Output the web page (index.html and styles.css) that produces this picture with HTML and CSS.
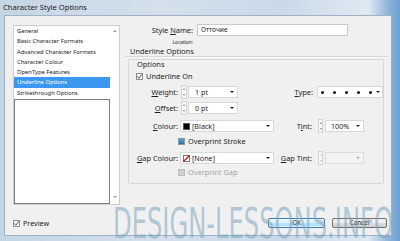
FILE: index.html
```html
<!DOCTYPE html>
<html lang="en">
<head>
    <meta charset="UTF-8">
    <meta name="viewport" content="width=device-width, initial-scale=1.0">
    <title>Character Style Options</title>
    <link rel="stylesheet" href="styles.css">
</head>
<body>
    <div class="window">
        <div class="titlebar">Character Style Options</div>
        <div class="dialog">
            <div class="main">
                <div class="list">
                    <div class="items">
                        <div class="item">General</div>
                        <div class="item">Basic Character Formats</div>
                        <div class="item">Advanced Character Formats</div>
                        <div class="item">Character Colour</div>
                        <div class="item">OpenType Features</div>
                        <div class="item selected">Underline Options</div>
                        <div class="item">Strikethrough Options</div>
                        <div class="empty"></div>
                    </div>
                    <div class="scroll">
                        <span class="arrow-up"></span>
                        <span class="arrow-down"></span>
                    </div>
                </div>
                <div class="panel">
                    <div class="name-row">
                        <span class="name-label">Style <u>N</u>ame:</span>
                        <div class="text-input">Отточие</div>
                    </div>
                    <div class="location-row"><span class="location-label">Location:</span></div>
                    <div class="section-title">Underline Options</div>
                    <div class="group">
                        <div class="group-title">Options</div>
                        <div class="row row-underline">
                            <span class="check">
                                <svg width="7" height="7" viewBox="0 0 7 7"><path d="M1.3 3.4 L2.9 5.3 L5.8 1.2" fill="none" stroke="#4a4a4a" stroke-width="0.9"/></svg>
                            </span>
                            <span class="check-label">Underline On</span>
                        </div>
                        <div class="row row-field row-weight">
                            <span class="label"><u>W</u>eight:</span>
                            <span class="spin"><i class="up"></i><i class="down"></i></span>
                            <div class="combo combo-small"><span>1 pt</span><i class="caret"></i></div>
                            <span class="label label-type"><u>T</u>ype:</span>
                            <div class="combo combo-type">
                                <span class="dots"><b></b><b></b><b></b><b></b><b></b></span>
                                <i class="caret"></i>
                            </div>
                        </div>
                        <div class="row row-field row-offset">
                            <span class="label"><u>O</u>ffset:</span>
                            <span class="spin"><i class="up"></i><i class="down"></i></span>
                            <div class="combo combo-small"><span>0 pt</span><i class="caret"></i></div>
                        </div>
                        <div class="row row-field row-colour">
                            <span class="label"><u>C</u>olour:</span>
                            <div class="combo combo-colour">
                                <span class="swatch swatch-black"></span><span>[Black]</span><i class="caret"></i>
                            </div>
                            <span class="label label-tint">T<u>i</u>nt:</span>
                            <span class="spin spin-tint"><i class="up"></i><i class="down"></i></span>
                            <div class="combo combo-tint"><span>100%</span><i class="caret"></i></div>
                        </div>
                        <div class="row row-overprint">
                            <span class="check check-blue"></span>
                            <span class="check-label">Overprint Stroke</span>
                        </div>
                        <div class="row row-field row-gap">
                            <span class="label"><u>G</u>ap Colour:</span>
                            <div class="combo combo-colour">
                                <span class="swatch swatch-none">
                                    <svg width="7" height="7" viewBox="0 0 7 7"><path d="M0 7 L7 0" stroke="#d01818" stroke-width="1.4"/></svg>
                                </span><span>[None]</span><i class="caret"></i>
                            </div>
                            <span class="label label-tint"><u>G</u>ap Tint:</span>
                            <span class="spin spin-tint disabled"><i class="up"></i><i class="down"></i></span>
                            <div class="combo combo-tint disabled"><span></span><i class="caret"></i></div>
                        </div>
                        <div class="row row-overprint row-gap-check">
                            <span class="check check-disabled"></span>
                            <span class="check-label disabled-text">Overprint Gap</span>
                        </div>
                    </div>
                </div>
            </div>
            <div class="footer">
                <span class="check">
                    <svg width="7" height="7" viewBox="0 0 7 7"><path d="M1.3 3.4 L2.9 5.3 L5.8 1.2" fill="none" stroke="#4a4a4a" stroke-width="0.9"/></svg>
                </span>
                <span class="preview-label">Preview</span>
                <button class="button button-ok">OK</button>
                <button class="button button-cancel">Cancel</button>
            </div>
        </div>
        <svg class="watermark" width="282" height="35" viewBox="0 0 282 35">
            <text x="0" y="33" textLength="280" lengthAdjust="spacingAndGlyphs">DESIGN-LESSONS.INFO</text>
        </svg>
    </div>
</body>
</html>
```

FILE: styles.css
```css
body {
    margin: 0;
    padding: 0;
    font-family: "Noto Sans", "DejaVu Sans", sans-serif;
    color: #1e1e1e;
    overflow: hidden;
}
.window {
    position: relative;
    width: 400px;
    height: 241px;
    box-sizing: border-box;
    padding: 0 8px 5px 4px;
    display: flex;
    flex-direction: column;
    background: linear-gradient(90deg, #c4d5e4 0%, #d3e0ec 40%, #c9d9e8 70%, #dfe9f3 92%, #8fb5d8 97%, #6a9fd0 100%);
    overflow: hidden;
}
.titlebar {
    height: 15px;
    line-height: 14px;
    padding-left: 0;
    margin-left: -1px;
    font-size: 7.6px;
    color: #1b1b1b;
}
.dialog {
    flex: 1;
    background-color: #f0f0f0;
    border: 1px solid #9fb2c3;
    display: flex;
    flex-direction: column;
}
.main {
    display: flex;
    padding: 8px 0 0 8px;
}

/* left list */
.list {
    margin-top: 1px;
    width: 108px;
    height: 180px;
    box-sizing: border-box;
    border: 1px solid #cdcdcd;
    background-color: white;
    display: flex;
}
.items {
    width: 96px;
    display: flex;
    flex-direction: column;
}
.item {
    height: 10.3px;
    line-height: 10.3px;
    padding-left: 3px;
    font-size: 5.8px;
    color: #222;
    white-space: nowrap;
}
.item.selected {
    background-color: #3b97f0;
    color: white;
}
.empty {
    flex: 1;
    margin-top: 1px;
    border: 1px solid #7d7d7d;
}
.scroll {
    flex: 1;
    display: flex;
    flex-direction: column;
    justify-content: space-between;
    align-items: center;
    padding: 4px 0 6px;
}
.arrow-up, .arrow-down {
    width: 0;
    height: 0;
    border-left: 2px solid transparent;
    border-right: 2px solid transparent;
}
.arrow-up {
    border-bottom: 2px solid #9a9a9a;
}
.arrow-down {
    border-top: 2px solid #9a9a9a;
}

/* right panel */
.panel {
    flex: 1;
    padding-left: 5px;
    margin-right: 3px;
    font-size: 7.4px;
}
.name-row {
    display: flex;
    align-items: center;
    height: 12px;
}
.name-label {
    width: 68px;
    text-align: right;
    margin-right: 4px;
}
.text-input {
    width: 151px;
    height: 12px;
    box-sizing: border-box;
    border: 1px solid #cbcbcb;
    background-color: white;
    line-height: 10px;
    padding-left: 3px;
    font-size: 6.6px;
}
.location-row {
    margin-top: 2px;
    height: 8px;
    line-height: 8px;
}
.location-label {
    display: block;
    width: 68px;
    text-align: right;
    font-size: 4.8px;
}
.section-title {
    height: 10px;
    line-height: 10px;
    padding-left: 5px;
    border-bottom: 1px solid #d6d6d6;
    box-shadow: 0 1px 0 #fafafa;
}
.group {
    margin: 2px 4px 0 3px;
    height: 125px;
    box-sizing: border-box;
    border: 1px solid #d6d9dc;
    border-radius: 2px;
}
.group-title {
    height: 8px;
    line-height: 8px;
    padding-left: 8px;
}
.row {
    display: flex;
    align-items: center;
}
.row-underline {
    height: 10px;
    margin-top: 3px;
    padding-left: 7px;
}
.row-field {
    height: 12px;
}
.row-weight {
    margin-top: 5px;
}
.row-offset {
    margin-top: 4px;
}
.row-colour {
    margin-top: 6px;
}
.row-overprint {
    height: 8px;
    margin-top: 5px;
    padding-left: 49px;
}
.row-gap {
    margin-top: 7px;
}
.row-gap-check {
    margin-top: 4px;
}
.label {
    width: 49px;
    text-align: right;
    white-space: nowrap;
    flex-shrink: 0;
}
.row-field .label:first-child {
    margin-right: 3px;
}
.row-colour .label:first-child, .row-gap .label:first-child {
    margin-right: 2px;
}
.label-type {
    width: 75px;
    margin-right: 4px;
}
.label-tint {
    width: 38px;
    margin-right: 6px;
}
.check {
    width: 7px;
    height: 7px;
    box-sizing: border-box;
    border: 1px solid #8e8f8f;
    background: linear-gradient(#f4f4f4, #ffffff);
    display: flex;
    flex-shrink: 0;
}
.check svg {
    margin: -1px;
}
.check-blue {
    background: linear-gradient(#6ba3c4, #2f7299);
    border-color: #7f98aa;
}
.check-disabled {
    background: #cfcfcf;
    border-color: #bdbdbd;
}
.check-label {
    margin-left: 3px;
}
.disabled-text {
    color: #a3a3a3;
}
.spin {
    width: 6px;
    height: 14px;
    box-sizing: border-box;
    border: 1px solid #d2d2d2;
    background-color: #f7f7f7;
    display: flex;
    flex-direction: column;
    justify-content: space-around;
    align-items: center;
    margin-right: 1px;
}
.spin-tint {
    width: 5px;
    margin-right: 2px;
}
.spin i {
    width: 0;
    height: 0;
    border-left: 1.5px solid transparent;
    border-right: 1.5px solid transparent;
}
.spin .up {
    border-bottom: 2px solid #8a8a8a;
}
.spin .down {
    border-top: 2px solid #8a8a8a;
}
.spin.disabled .up {
    border-bottom-color: #c8c8c8;
}
.spin.disabled .down {
    border-top-color: #c8c8c8;
}
.combo {
    height: 12px;
    box-sizing: border-box;
    border: 1px solid #d8d8d8;
    background-color: white;
    display: flex;
    align-items: center;
    padding: 0 3px 0 6px;
    font-size: 7.2px;
}
.combo span {
    flex: 1;
    white-space: nowrap;
}
.caret {
    width: 0;
    height: 0;
    border-left: 2px solid transparent;
    border-right: 2px solid transparent;
    border-top: 2.5px solid #1e1e1e;
}
.combo.disabled {
    background-color: #f3f3f3;
    border-color: #dcdcdc;
}
.combo.disabled .caret {
    border-top-color: #b4b4b4;
}
.combo-small {
    width: 50px;
}
.combo-type {
    width: 66px;
    padding: 0 2px 0 3px;
}
.dots {
    display: flex;
    gap: 9px;
}
.dots b {
    width: 3px;
    height: 3px;
    border-radius: 50%;
    background-color: #111;
}
.combo-colour {
    width: 94px;
    padding-left: 2px;
}
.combo-tint {
    width: 39px;
    padding-left: 5px;
}
.swatch {
    flex: none !important;
    width: 7px;
    height: 7px;
    box-sizing: border-box;
    margin-right: 2px;
    display: flex;
}
.swatch-black {
    background-color: #000;
    border: 1px solid #555;
}
.swatch-none {
    background-color: white;
    border: 1px solid #777;
}
.swatch-none svg {
    margin: -1px;
}

/* footer */
.footer {
    display: flex;
    align-items: center;
    height: 12px;
    margin-top: 12px;
    padding: 0 4px 0 8px;
}
.preview-label {
    margin-left: 3px;
    font-size: 7.2px;
}
.button {
    height: 10px;
    box-sizing: border-box;
    border-radius: 2px;
    font-family: "Noto Sans", "DejaVu Sans", sans-serif;
    font-size: 6.2px;
    line-height: 8px;
    padding: 0;
    color: #1e1e1e;
}
.button-ok {
    margin-left: auto;
    width: 57px;
    border: 1px solid #3c7fb1;
    background: linear-gradient(#eaf6fd 0%, #d9f0fc 50%, #bee6fd 51%, #a7d9f5 100%);
    box-shadow: inset 0 0 0 1px rgba(255, 255, 255, 0.6);
}
.button-cancel {
    margin-left: 7px;
    width: 55px;
    border: 1px solid #707070;
    background: linear-gradient(#f2f2f2 0%, #ebebeb 50%, #dddddd 51%, #cfcfcf 100%);
}

/* site watermark over the screenshot */
.watermark {
    position: absolute;
    left: 113px;
    top: 205px;
    pointer-events: none;
}
.watermark text {
    font-family: "DejaVu Sans Condensed", "DejaVu Sans", sans-serif;
    font-size: 43px;
    fill: rgba(120, 165, 190, 0.55);
}
```
